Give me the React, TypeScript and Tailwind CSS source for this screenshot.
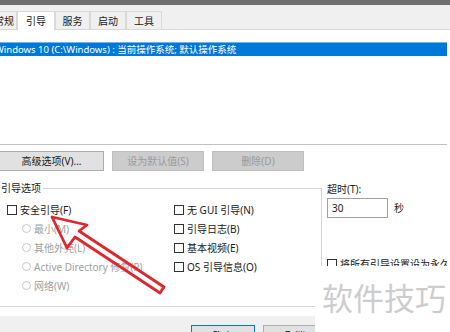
import React from "react";

const font = "font-['Noto_Sans','Noto_Sans_CJK_SC',sans-serif]";

function Tab({ label, active, className = "" }: { label: string; active?: boolean; className?: string }) {
  return (
    <div
      className={`h-[18px] flex items-center justify-center border border-b-0 border-[#d9d9d9] ${
        active ? "bg-white h-[19px] -mb-px" : "bg-[#f0f0f0]"
      } ${className}`}
    >
      {label}
    </div>
  );
}

function Check({ label, disabled }: { label: string; disabled?: boolean }) {
  return (
    <div className={`h-[19px] flex items-center gap-[3px] whitespace-nowrap ${disabled ? "text-[#a0a0a0]" : "text-[#1a1a1a]"}`}>
      <span className="w-[10px] h-[10px] border border-[#333] bg-white shrink-0" />
      <span>{label}</span>
    </div>
  );
}

function Radio({ label }: { label: string }) {
  return (
    <div className="h-[19px] flex items-center gap-[3px] pl-[15px] text-[#a0a0a0] whitespace-nowrap">
      <span className="w-[9px] h-[9px] rounded-full border border-[#c8c8c8] bg-white shrink-0" />
      <span>{label}</span>
    </div>
  );
}

export default function App() {
  return (
    <div className={`relative w-[450px] h-[332px] overflow-hidden bg-white text-[10px] leading-[12px] ${font}`}>
      {/* window frame */}
      <div className="h-[5px] bg-[#6f6f6f]" />

      {/* tabs */}
      <div className="h-[25px] bg-[#f0f0f0] border-b border-[#d9d9d9] flex items-end text-[#1a1a1a]">
        <Tab label="常规" className="w-[34px] -ml-[17px] justify-end pr-[2px]" />
        <Tab label="引导" active className="w-[38px]" />
        <Tab label="服务" className="w-[35px]" />
        <Tab label="启动" className="w-[36px]" />
        <Tab label="工具" className="w-[36px]" />
      </div>

      {/* OS list */}
      <div className="h-[115px] border-b border-[#c2c2c2] mr-[3px] pt-[12px]">
        <div className="h-[14px] bg-[#0078d7] border-t border-[#6fb3ea] flex items-center text-white text-[9.5px] whitespace-nowrap -ml-[5px]">
          Windows 10 (C:\Windows) : 当前操作系统; 默认操作系统
        </div>
      </div>

      {/* buttons */}
      <div className="flex gap-[8px] mt-[6px] h-[20px]">
        <div className="w-[105px] -ml-px flex items-center justify-center bg-[#e1e1e1] border border-[#adadad] text-[#1a1a1a]">
          高级选项(V)...
        </div>
        <div className="w-[92px] flex items-center justify-center bg-[#cccccc] border border-[#bfbfbf] text-[#9a9a9a]">
          设为默认值(S)
        </div>
        <div className="w-[92px] flex items-center justify-center bg-[#cccccc] border border-[#bfbfbf] text-[#9a9a9a]">
          删除(D)
        </div>
      </div>

      {/* boot options + timeout */}
      <div className="flex mt-[11px]">
        <fieldset className="w-[326px] shrink-0 -ml-[4px] h-[125px] border border-[#d5d5d5] px-0">
          <legend className="ml-[2px] px-[2px] text-[#1a1a1a]">引导选项</legend>
          <div className="grid grid-cols-[167px_1fr] pl-[10px] pt-[6px]">
            <div className="flex flex-col">
              <Check label="安全引导(F)" />
              <Radio label="最小(M)" />
              <Radio label="其他外壳(L)" />
              <Radio label="Active Directory 修复(P)" />
              <Radio label="网络(W)" />
            </div>
            <div className="flex flex-col">
              <Check label="无 GUI 引导(N)" />
              <Check label="引导日志(B)" />
              <Check label="基本视频(E)" />
              <Check label="OS 引导信息(O)" />
            </div>
          </div>
        </fieldset>

        <div className="flex-1 min-w-0 pl-[5px] pt-[1px] text-[#1a1a1a]">
          <div>超时(T):</div>
          <div className="flex items-center gap-[6px] mt-[3px]">
            <div className="w-[61px] h-[20px] border border-[#a0a0a0] pl-[4px] flex items-center">30</div>
            <span>秒</span>
          </div>
          <div className="mt-[40px] flex items-center gap-[3px] whitespace-nowrap">
            <span className="w-[10px] h-[10px] border border-[#333] shrink-0" />
            <span>将所有引导设置设为永久性(K)</span>
          </div>
        </div>
      </div>

      {/* footer */}
      <div className="mt-[9px] h-[30px] bg-[#f0f0f0] flex gap-[8px] pl-[191px] pt-[9px]">
        <div className="w-[64px] h-[22px] shrink-0 bg-[#e1e1e1] border border-[#0078d7] flex items-center justify-center">确定</div>
        <div className="w-[64px] h-[22px] shrink-0 bg-[#e1e1e1] border border-[#adadad] flex items-center justify-center">取消</div>
      </div>

      {/* watermark patch */}
      <div className="absolute right-0 bottom-0 w-[135px] h-[66px] bg-white flex items-center pl-[7px] pb-[6px]">
        <span className="text-[31px] leading-none text-[#cdcdcd] font-['Noto_Sans_CJK_SC',sans-serif]">软件技巧</span>
      </div>

      {/* red arrow annotation */}
      <svg className="absolute inset-0 pointer-events-none" width="450" height="332">
        <polygon
          points="52,217 87,225 79,231 164,287 160,293 75,237 67,248"
          fill="none"
          stroke="#e0262e"
          strokeWidth="2.8"
          strokeLinejoin="round"
        />
      </svg>
    </div>
  );
}
